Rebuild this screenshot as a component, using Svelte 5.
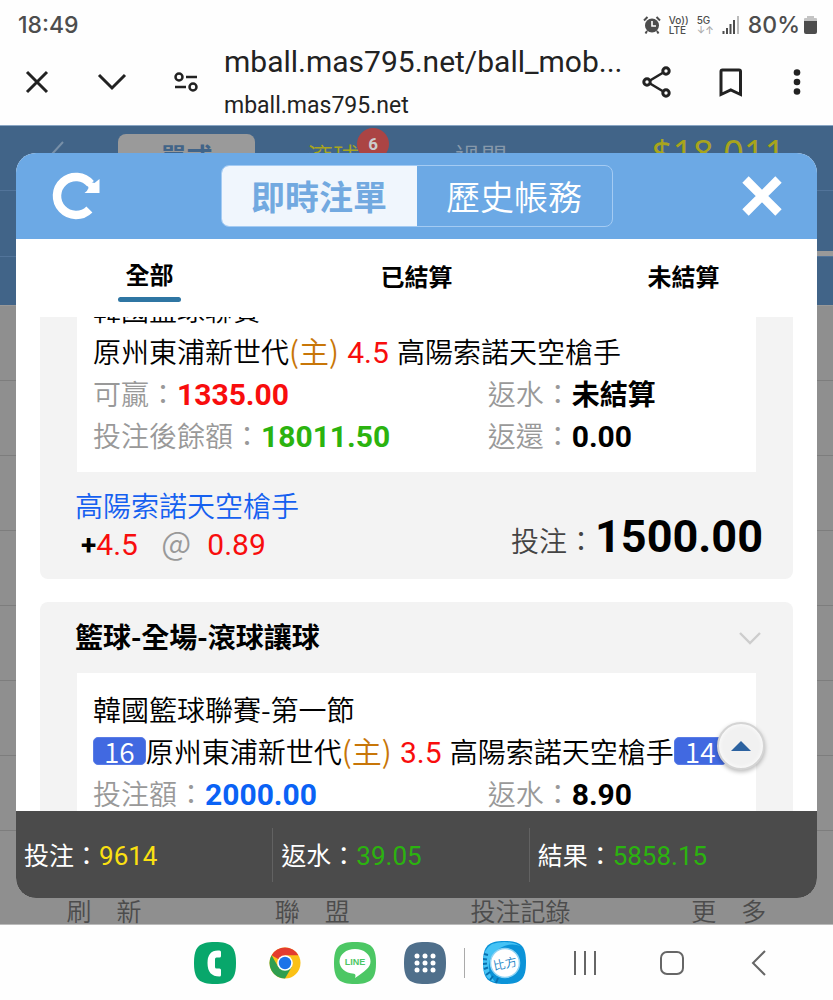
<script lang="ts">
  import { onMount } from 'svelte';

  const filters = ['全部', '已結算', '未結算'];
  const shortcuts = ['刷　新', '聯　盟', '投注記錄', '更　多'];
  const totals = [
    { label: '投注：', value: '9614', tone: 'yellow' },
    { label: '返水：', value: '39.05', tone: 'green' },
    { label: '結果：', value: '5858.15', tone: 'green' },
  ];
  const bets = [
    {
      title: '',
      league: '韓國籃球聯賽',
      home: '原州東浦新世代',
      away: '高陽索諾天空槍手',
      line: '4.5',
      homeScore: '',
      awayScore: '',
      fields: [
        { label: '可贏：', value: '1335.00', tone: 'red' },
        { label: '返水：', value: '未結算', tone: 'pending' },
        { label: '投注後餘額：', value: '18011.50', tone: 'green' },
        { label: '返還：', value: '0.00', tone: '' },
      ],
      pick: { team: '高陽索諾天空槍手', line: '4.5', odds: '0.89', stake: '1500.00' },
    },
    {
      title: '籃球-全場-滾球讓球',
      league: '韓國籃球聯賽-第一節',
      home: '原州東浦新世代',
      away: '高陽索諾天空槍手',
      line: '3.5',
      homeScore: '16',
      awayScore: '14',
      fields: [
        { label: '投注額：', value: '2000.00', tone: 'blue' },
        { label: '返水：', value: '8.90', tone: '' },
      ],
      pick: null,
    },
  ];

  let active = $state('全部');
  let view = $state('live');
  let list: HTMLDivElement;

  onMount(() => {
    list.scrollTop = 44;
  });
</script>

<div class="phone">
  <header class="status">
    <span class="clock">18:49</span>
    <div class="signals">
      <svg width="18" height="18" viewBox="0 0 18 18" aria-hidden="true">
        <circle cx="9" cy="9.500" r="7" fill="#4d4d4d" />
        <path d="M1 4.500L4.500 1M17 4.500L13.500 1M4 15l-1.500 2.500M14 15l1.500 2.500" stroke="#4d4d4d" stroke-width="2" />
        <path d="M9 5v5h4" fill="none" stroke="#fff" stroke-width="1.600" />
      </svg>
      <span class="tiny">Vo))<br />LTE</span>
      <span class="tiny">5G<br /><i>↓↑</i></span>
      <svg width="18" height="18" viewBox="0 0 18 18" aria-hidden="true">
        <path d="M1.500 15v3M5 12v6M8.500 8v10M12 4v14" stroke="#4d4d4d" stroke-width="2" />
        <path d="M16 0v18" stroke="#bbb" stroke-width="2" />
      </svg>
      <span class="percent">80%</span>
      <svg width="13" height="18" viewBox="0 0 13 18" aria-hidden="true">
        <path d="M3 0h7v2h2q1 0 1 1v3H0V3q0-1 1-1h2z" fill="#c4c4c4" />
        <path d="M0 5h13v11q0 2-2 2H2q-2 0-2-2z" fill="#4d4d4d" />
      </svg>
    </div>
  </header>

  <div class="browser">
    <button aria-label="關閉分頁">
      <svg width="30" height="30" viewBox="0 0 30 30"><path d="M5 5l20 20M25 5L5 25" /></svg>
    </button>
    <button class="fold" aria-label="收合">
      <svg width="30" height="30" viewBox="0 0 30 30"><path d="M2 8l13 13L28 8" /></svg>
    </button>
    <button class="site" aria-label="網站設定">
      <svg width="26" height="22" viewBox="0 0 26 22">
        <g stroke-width="2.500"><circle cx="6" cy="6" r="3.500" /><path d="M13 6h11M2 16h11" /><circle cx="20" cy="16" r="3.500" /></g>
      </svg>
    </button>
    <div class="address">
      <div class="url">mball.mas795.net/ball_mob...</div>
      <div class="host">mball.mas795.net</div>
    </div>
    <div class="tools">
      <button aria-label="分享">
        <svg width="32" height="34" viewBox="0 0 32 34">
          <path d="M9 15.500L21.500 8M9 18.500L21.500 26" stroke-width="2.600" />
          <g stroke-width="3"><circle cx="6" cy="17" r="3.200" /><circle cx="25" cy="6" r="3.200" /><circle cx="25" cy="28" r="3.200" /></g>
        </svg>
      </button>
      <button aria-label="書籤">
        <svg width="32" height="34" viewBox="0 0 32 34"><path d="M10 29.500V6.500q0-1.500 1.500-1.500h16.500q1.500 0 1.500 1.500v23l-9.750-4.500z" /></svg>
      </button>
      <button aria-label="選單">
        <svg width="32" height="34" viewBox="0 0 32 34">
          <g class="solid"><circle cx="16" cy="7.500" r="3.300" /><circle cx="16" cy="17" r="3.300" /><circle cx="16" cy="26.500" r="3.300" /></g>
        </svg>
      </button>
    </div>
  </div>

  <main>
    <div class="behind">
      <div class="sportbar">
        <svg class="chev" width="14" height="26" viewBox="0 0 14 26" aria-hidden="true"><path d="M13 1L2 13l11 12" fill="none" stroke="#7890a8" stroke-width="2" /></svg>
        <span class="mode on">單式</span>
        <span class="mode live">滾球<b>6</b></span>
        <span class="mode">過關</span>
        <span class="cash">$18,011</span>
      </div>
      <div class="strip"><i></i></div>
      <div class="strip last"></div>
      <div class="rows">
        {#each Array(7) as _}
          <div class="line"></div>
        {/each}
      </div>
      <div class="shortcuts">
        {#each shortcuts as name}
          <span>{name}</span>
        {/each}
      </div>
    </div>

    <section class="modal">
      <div class="head">
        <button class="round" aria-label="重新整理">
          <svg width="50" height="50" viewBox="0 0 50 50">
            <path d="M38.400 38.400A19 19 0 1 1 39.600 12.800" fill="none" stroke="#fff" stroke-width="8.500" />
            <path d="M48.500 8v14H33.500q3-2 4-5l-2-7 8 2z" fill="#fff" />
          </svg>
        </button>
        <div class="seg">
          <button class:on={view === 'live'} onclick={() => (view = 'live')}>即時注單</button>
          <button class:on={view === 'history'} onclick={() => (view = 'history')}>歷史帳務</button>
        </div>
        <button class="round" aria-label="關閉">
          <svg width="50" height="50" viewBox="0 0 50 50"><path d="M8.500 8.500l33 33M41.500 8.500l-33 33" stroke="#fff" stroke-width="9" /></svg>
        </button>
      </div>

      <nav class="filters">
        {#each filters as name}
          <button class:active={active === name} onclick={() => (active = name)}><span>{name}</span></button>
        {/each}
      </nav>

      <div class="list" bind:this={list}>
        {#each bets as bet}
          <article class="card">
            {#if bet.title}
              <header>
                <h2>{bet.title}</h2>
                <svg width="22" height="14" viewBox="0 0 22 14" aria-hidden="true"><path d="M1 2l10 10L21 2" fill="none" stroke="#cdcdcd" stroke-width="2.400" /></svg>
              </header>
            {/if}
            <div class="box">
              <div class="row">{bet.league}</div>
              <div class="row">
                {#if bet.homeScore}<span class="score">{bet.homeScore}</span>{/if}{bet.home}<span class="host-team">(主)</span>
                <span class="num red line-value">{bet.line}</span>
                {bet.away}{#if bet.awayScore}<span class="score">{bet.awayScore}</span>{/if}
              </div>
              <div class="fields">
                {#each bet.fields as field}
                  <div class="row">
                    <span class="label">{field.label}</span><b class="num {field.tone}">{field.value}</b>
                  </div>
                {/each}
              </div>
            </div>
            {#if bet.pick}
              <footer>
                <div class="pick">
                  <div class="team">{bet.pick.team}</div>
                  <div class="odds">
                    <b>+</b><span class="num red">{bet.pick.line}</span>
                    <span class="at">@</span>
                    <span class="num red">{bet.pick.odds}</span>
                  </div>
                </div>
                <div class="stake">投注：<b>{bet.pick.stake}</b></div>
              </footer>
            {/if}
          </article>
        {/each}
      </div>

      <button class="top" aria-label="回到頂端" onclick={() => list.scrollTo({ top: 0 })}>
        <svg width="20" height="10" viewBox="0 0 20 10"><path d="M10 0l10 10H0z" fill="#2c62a0" /></svg>
      </button>

      <div class="totals">
        {#each totals as total}
          <div>{total.label}<span class={total.tone}>{total.value}</span></div>
        {/each}
      </div>
    </section>
  </main>

  <footer class="dock">
    <div class="apps">
      <svg width="42" height="42" viewBox="0 0 42 42" role="img" aria-label="電話">
        <path d="M21 0C37 0 42 5 42 21S37 42 21 42 0 37 0 21 5 0 21 0z" fill="#08a76b" />
        <path d="M25.500 8.500q-12-1-12 12.500t12 13.500q1.500 0 1.500-1.500v-5q0-1.500-1.500-1.500h-3q-1.500 0-1.500-1.500v-8q0-1.500 1.500-1.500h3q1.500 0 1.500-1.500V10q0-1.500-1.500-1.500z" fill="#fff" />
      </svg>
      <svg width="42" height="42" viewBox="0 0 42 42" role="img" aria-label="瀏覽器">
        <circle cx="21" cy="21" r="15.500" fill="#fbc116" />
        <path d="M21 21L7.600 13.250A15.500 15.500 0 0 1 34.400 13.250H21z" fill="#e33b2e" />
        <path d="M7.600 13.250A15.500 15.500 0 0 0 21 36.500L27.700 24.900 21 21l-6.700 3.900z" fill="#2f9e4f" />
        <circle cx="21" cy="21" r="7.800" fill="#fff" />
        <circle cx="21" cy="21" r="6.200" fill="#1b73e8" />
      </svg>
      <svg width="42" height="42" viewBox="0 0 42 42" role="img" aria-label="訊息">
        <path d="M21 0C37 0 42 5 42 21S37 42 21 42 0 37 0 21 5 0 21 0z" fill="#4cc764" />
        <path d="M21 7c9 0 15.500 5.500 15.500 12.500 0 6-6 10-15.500 16.500 1-3 .5-4-1-4.300C11 31 5.500 26 5.500 19.500 5.500 12.500 12 7 21 7z" fill="#fff" />
        <text x="21" y="23" text-anchor="middle" font-size="9" font-weight="700" fill="#4cc764">LINE</text>
      </svg>
      <svg width="42" height="42" viewBox="0 0 42 42" role="img" aria-label="應用程式">
        <path d="M21 0C37 0 42 5 42 21S37 42 21 42 0 37 0 21 5 0 21 0z" fill="#4f6f8b" />
        {#each [14, 21, 28] as cy}
          {#each [13, 21, 29] as cx}
            <circle {cx} {cy} r="2.500" fill="#fff" />
          {/each}
        {/each}
      </svg>
    </div>
    <span class="rule"></span>
    <svg width="43" height="43" viewBox="0 0 43 43" role="img" aria-label="比分">
      <path d="M21.500 0C38 0 43 5 43 21.500S38 43 21.500 43 0 38 0 21.500 5 0 21.500 0z" fill="#0b93d8" />
      <path d="M9 3Q24-2 38 5 27 1 17 7 7 13 6 23t6 18Q0 38 0 21.500 0 8 9 3z" fill="#45c3f5" />
      <path d="M1 13l4 1M0 18l4 .5M0 23l4-.5M1 28l4-1.500M3 34l4-3M7 39l3-4M13 42l2-5" stroke="#0871b0" stroke-width="2" />
      <circle cx="22" cy="22" r="14.500" fill="#fff" stroke="#8fd4f5" stroke-width="1.500" />
      <text x="22" y="27" text-anchor="middle" font-size="12" fill="#1681c4" transform="rotate(-12 22 22)">比方</text>
    </svg>
    <div class="keys">
      <button aria-label="最近使用"><svg width="26" height="26" viewBox="0 0 26 26"><path d="M3 1v24M13 1v24M23 1v24" /></svg></button>
      <button aria-label="首頁"><svg width="26" height="26" viewBox="0 0 26 26"><rect x="2" y="2" width="22" height="22" rx="6" /></svg></button>
      <button aria-label="返回"><svg width="26" height="26" viewBox="0 0 26 26"><path d="M19 1L7 13l12 12" /></svg></button>
    </div>
  </footer>
</div>

<style>
  :global(body) {
    margin: 0;
    background: #fefefe;
  }
  .phone {
    display: flex;
    flex-direction: column;
    height: 100vh;
    font-family: 'Noto Sans CJK TC', sans-serif;
    font-size: 28px;
    font-weight: 350;
    color: #000;
    overflow: hidden;
  }
  button {
    padding: 0;
    border: 0;
    background: none;
    font: inherit;
    color: inherit;
    cursor: pointer;
  }
  svg {
    display: block;
    flex: none;
  }
  b {
    font-weight: 700;
  }

  .status {
    display: flex;
    justify-content: space-between;
    align-items: center;
    height: 32px;
    padding: 9px 16px 0 18px;
    font: 500 23px Inter, sans-serif;
    color: #4d4d4d;
  }
  .signals {
    display: flex;
    align-items: center;
    gap: 8px;
  }
  .tiny {
    font-size: 10px;
    line-height: 10px;
  }
  .tiny i {
    font-style: normal;
    color: #aaa;
  }
  .percent {
    margin-right: -4px;
  }

  .browser {
    display: flex;
    align-items: center;
    box-sizing: border-box;
    height: 84px;
    padding: 0 20px 3px 22px;
    color: #222;
  }
  .browser svg {
    fill: none;
    stroke: currentColor;
    stroke-width: 3;
  }
  .browser .solid {
    fill: currentColor;
    stroke: none;
  }
  .fold {
    margin-left: 45px;
  }
  .site {
    margin: 0 25px 0 46px;
  }
  .address {
    flex: 1;
    min-width: 0;
    padding-top: 4px;
    font-family: Roboto, sans-serif;
    font-weight: 400;
    white-space: nowrap;
  }
  .url {
    font-size: 30px;
    line-height: 44px;
  }
  .host {
    font-size: 23px;
    line-height: 44px;
  }
  .tools {
    display: flex;
    gap: 38px;
  }

  main {
    position: relative;
    flex: 1;
    min-height: 0;
  }
  .behind {
    display: flex;
    flex-direction: column;
    height: 100%;
    background: #8f8f8f;
    overflow: hidden;
  }
  .sportbar {
    display: flex;
    box-sizing: border-box;
    height: 66px;
    padding: 8px 48px 0 50px;
    border-top: 1px solid #8aa6c4;
    border-bottom: 1px solid #52749a;
    background: #416488;
    font-size: 26px;
    line-height: 44px;
  }
  .chev {
    margin: 7px 54px 0 0;
  }
  .mode {
    position: relative;
    margin-right: 96px;
    color: #8799ab;
  }
  .mode.on {
    box-sizing: border-box;
    width: 137px;
    margin-right: 52px;
    border-radius: 8px;
    background: #9a9a9a;
    color: #416488;
    font-weight: 700;
    text-align: center;
  }
  .mode.live {
    color: #a8a41c;
  }
  .mode b {
    position: absolute;
    top: -6px;
    right: -30px;
    width: 32px;
    height: 32px;
    border-radius: 50%;
    background: #ab4444;
    color: #ccc;
    font: 700 17px/32px Roboto, sans-serif;
    text-align: center;
  }
  .cash {
    margin-left: auto;
    color: #a8a41c;
    font: 36px/38px 'Noto Sans', sans-serif;
  }
  .strip {
    display: flex;
    justify-content: flex-end;
    align-items: flex-end;
    box-sizing: border-box;
    height: 66px;
    border-bottom: 1px solid #52749a;
    background: #416488;
  }
  .strip i {
    width: 17px;
    height: 5px;
    background: #999;
  }
  .strip.last {
    height: 49px;
    border-color: #999;
  }
  .rows {
    flex: 1;
  }
  .line {
    box-sizing: border-box;
    height: 75px;
    border-bottom: 1px solid #7d7d7d;
  }
  .shortcuts {
    display: grid;
    grid-template-columns: repeat(4, 1fr);
    border-bottom: 1px solid #bbb;
    color: #4c4c4c;
    font-size: 25px;
    line-height: 28px;
    text-align: center;
  }

  .modal {
    position: absolute;
    inset: 28px 16px 27px;
    display: flex;
    flex-direction: column;
    border-radius: 20px;
    background: #fff;
    overflow: hidden;
  }
  .head {
    display: flex;
    justify-content: space-between;
    align-items: center;
    box-sizing: border-box;
    height: 86px;
    padding: 0 30px 0 35px;
    background: #6ca9e5;
  }
  .seg {
    display: flex;
    margin-right: 5px;
    border: 1px solid #a4cbf3;
    border-radius: 8px;
    overflow: hidden;
  }
  .seg button {
    width: 195px;
    height: 60px;
    color: #fff;
    font-size: 34px;
    line-height: 58px;
  }
  .seg .on {
    background: #f0f6fd;
    color: #72a9e0;
    font-weight: 700;
  }
  .filters {
    display: grid;
    grid-template-columns: repeat(3, 1fr);
    height: 78px;
    font-size: 24px;
    font-weight: 700;
  }
  .filters button {
    height: 74px;
  }
  .filters span {
    display: inline-block;
    line-height: 50px;
  }
  .filters .active span {
    width: 63px;
    line-height: 46px;
  }
  .filters .active span::after {
    content: '';
    display: block;
    height: 5px;
    border-radius: 3px;
    background: #2f76a3;
  }
  .list {
    flex: 1;
    min-height: 0;
    padding: 0 24px;
    overflow-y: auto;
    scrollbar-width: none;
  }
  .card {
    margin-bottom: 23px;
    border-radius: 8px;
    background: #f3f3f3;
  }
  .card header {
    display: flex;
    justify-content: space-between;
    align-items: center;
    height: 71px;
    padding: 0 32px 0 35px;
  }
  h2 {
    margin: 0 0 4px;
    font-size: 28px;
  }
  .box {
    margin: 0 37px;
    padding: 15px 16px 16px;
    background: #fff;
  }
  .row {
    height: 42px;
    line-height: 42px;
    white-space: nowrap;
  }
  .fields {
    display: grid;
    grid-template-columns: 61% 39%;
  }
  .label {
    color: #999;
  }
  .num {
    font-family: Roboto, 'Noto Sans CJK TC', sans-serif;
    font-size: 30px;
    line-height: 30px;
  }
  span.num {
    font-weight: 400;
  }
  .line-value {
    margin: 0 2px;
  }
  .pending {
    font-size: 28px;
  }
  .red {
    color: #f80d0d;
  }
  .green {
    color: #2bb30f;
  }
  .blue {
    color: #0a62f5;
  }
  .yellow {
    color: #fbe011;
  }
  .host-team {
    color: #c87608;
    font-size: 30px;
    line-height: 30px;
  }
  .score {
    display: inline-block;
    padding: 0 10px;
    border: 1px solid #5a7ce6;
    border-radius: 5px;
    background: #4169e1;
    color: #fff;
    line-height: 26px;
  }
  .card footer {
    display: flex;
    justify-content: space-between;
    height: 107px;
    padding: 0 30px 0 35px;
  }
  .pick {
    padding-top: 14px;
    line-height: 38px;
  }
  .team {
    color: #1560f0;
  }
  .odds {
    padding-left: 6px;
  }
  .odds b {
    font-family: Roboto, sans-serif;
  }
  .at {
    margin: 0 10px 0 17px;
    color: #999;
    font-size: 32px;
    line-height: 32px;
  }
  .stake {
    color: #444;
    line-height: 136px;
  }
  .stake b {
    color: #000;
    font: 700 45px/60px Roboto, sans-serif;
  }
  .top {
    position: absolute;
    right: 52px;
    bottom: 128px;
    display: grid;
    place-items: center;
    width: 48px;
    height: 48px;
    border: 2px solid #d4d4d4;
    border-radius: 50%;
    background: #f1f1f1;
    box-shadow: 0 2px 4px #0004, inset 0 0 5px #fff;
  }
  .totals {
    display: flex;
    align-items: center;
    height: 87px;
    background: #4b4b4b;
    color: #fff;
    font-size: 25px;
    font-weight: 400;
    line-height: 52px;
  }
  .totals div {
    box-sizing: border-box;
    width: 32%;
    padding-left: 8px;
    white-space: nowrap;
  }
  .totals div + div {
    border-left: 1px solid #626262;
  }
  .totals span {
    font-family: Roboto, sans-serif;
    font-size: 26px;
  }

  .dock {
    display: flex;
    align-items: center;
    height: 75px;
    padding: 0 54px 0 194px;
  }
  .apps {
    display: flex;
    gap: 28px;
  }
  .apps text {
    font-family: 'Liberation Sans', sans-serif;
  }
  .rule {
    width: 1px;
    height: 30px;
    margin: 0 18px;
    background: #aaa;
  }
  .keys {
    display: flex;
    gap: 47px;
    margin-left: auto;
  }
  .keys button {
    display: grid;
    place-items: center;
    width: 40px;
    height: 42px;
  }
  .keys svg {
    fill: none;
    stroke: #666;
    stroke-width: 2;
  }
</style>
